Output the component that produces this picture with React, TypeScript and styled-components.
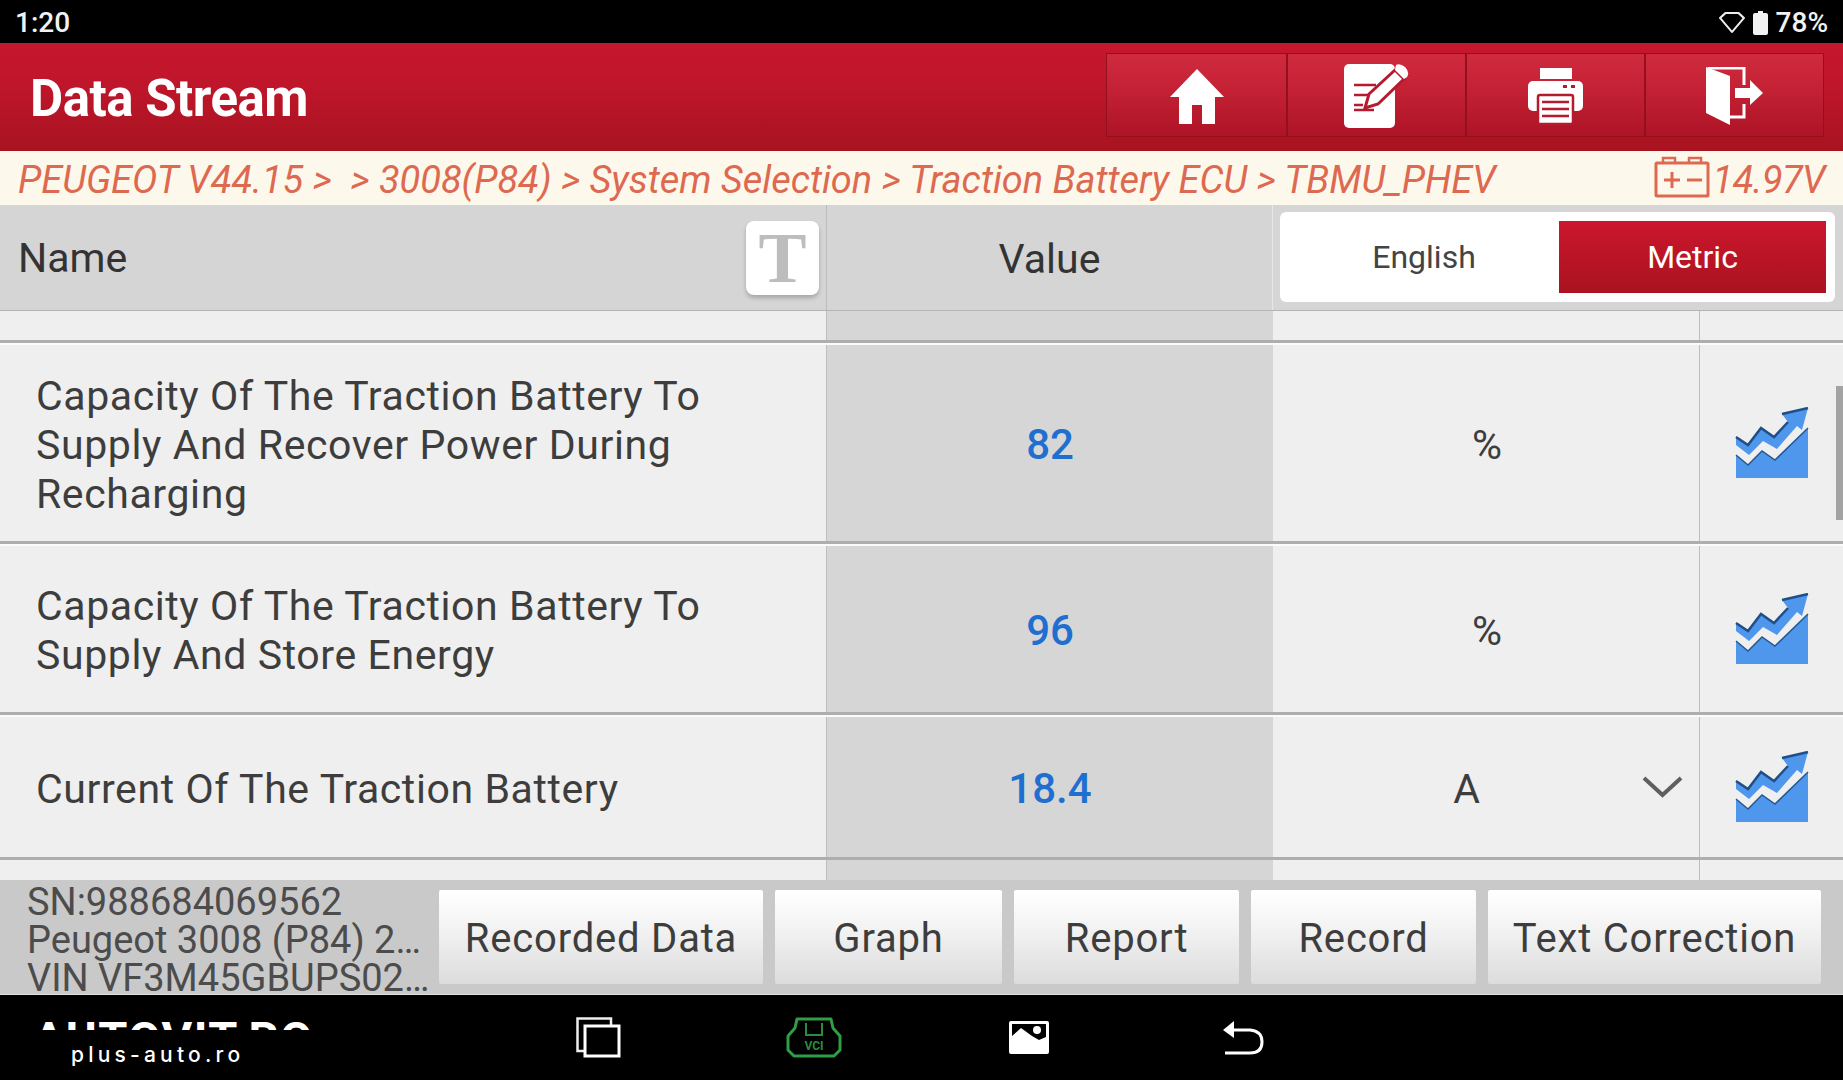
import React from 'react'
import styled, { createGlobalStyle } from 'styled-components'

const GlobalStyle = createGlobalStyle`
  html, body {
    margin: 0;
    padding: 0;
    overflow: hidden;
    background: #000;
    font-family: Roboto, "Liberation Sans", sans-serif;
  }
`

const COLUMNS = '827px 446px 427px 143px'

const Screen = styled.div`
  position: relative;
  width: 1843px;
  height: 1080px;
  display: flex;
  flex-direction: column;
  overflow: hidden;
`

const StatusBar = styled.div`
  height: 43px;
  flex: none;
  background: #000;
  color: #f2f2f2;
  display: flex;
  align-items: center;
  justify-content: space-between;
  padding: 2px 15px 0;
  box-sizing: border-box;
  font-size: 28px;
  font-weight: 500;
`

const StatusRight = styled.div`
  display: flex;
  align-items: center;
  gap: 8px;
`

const TitleBar = styled.div`
  height: 108px;
  flex: none;
  display: flex;
  align-items: center;
  justify-content: space-between;
  padding: 4px 19px 0 30px;
  box-sizing: border-box;
  background: linear-gradient(#c6172d, #c0162b 35%, #a81320);
`

const Title = styled.h1`
  margin: 0 0 2px;
  color: #fff;
  font-size: 51px;
  font-weight: 700;
  letter-spacing: -0.5px;
`

const ActionGroup = styled.div`
  display: flex;
  height: 82px;
  margin-bottom: 8px;
  border: 1px solid #95101d;
`

const ActionButton = styled.button`
  width: 179px;
  padding: 2px 0 0;
  border: 0;
  border-left: 2px solid #95101d;
  background: linear-gradient(#cf2a3e, #c72337 35%, #ad1425);
  display: flex;
  align-items: center;
  justify-content: center;

  &:first-child {
    border-left: 0;
  }
`

const Breadcrumb = styled.div`
  height: 54px;
  flex: none;
  background: #fdf8ec;
  color: #dd6a50;
  font-size: 38px;
  font-style: italic;
  letter-spacing: -0.03px;
  display: flex;
  align-items: center;
  justify-content: space-between;
  padding: 3px 18px 0;
  box-sizing: border-box;
  white-space: pre;
`

const Voltage = styled.div`
  display: flex;
  align-items: center;
  gap: 3px;
  letter-spacing: -0.6px;
`

const VoltageIcon = styled.span`
  display: flex;
  margin-top: -6px;
`

const TableHeader = styled.div`
  height: 106px;
  flex: none;
  display: grid;
  grid-template-columns: 827px 446px 570px;
  background: #d5d5d5;
  border-bottom: 1px solid #b4b4b4;
  box-sizing: border-box;
  color: #333;
  font-size: 41px;
`

const NameHead = styled.div`
  display: flex;
  align-items: center;
  justify-content: space-between;
  padding: 0 7px 0 18px;
  border-right: 1px solid #bcbcbc;
`

const FontButton = styled.button`
  width: 73px;
  height: 74px;
  padding: 0;
  border: 0;
  border-radius: 8px;
  background: #fff;
  color: #bdbdbd;
  font-family: "Liberation Serif", serif;
  font-size: 72px;
  font-weight: 700;
  line-height: 74px;
  box-shadow: 0 3px 4px rgba(0, 0, 0, 0.22);
`

const ValueHead = styled.div`
  display: flex;
  align-items: center;
  justify-content: center;
  padding-top: 2px;
  border-right: 1px solid #e6e6e6;
`

const UnitHead = styled.div`
  padding: 7px 8px 8px 7px;
  display: flex;
`

const UnitToggle = styled.div`
  flex: 1;
  display: flex;
  align-items: center;
  background: #fff;
  border-radius: 6px;
  padding: 0 9px 0 9px;
  font-size: 32px;
`

const UnitOption = styled.div<{ $active?: boolean }>`
  flex: ${p => (p.$active ? '0 0 267px' : '1')};
  height: 72px;
  display: flex;
  align-items: center;
  justify-content: center;
  color: ${p => (p.$active ? '#fff' : '#444')};
  background: ${p => (p.$active ? 'linear-gradient(#cc162d, #a91320)' : 'transparent')};
`

const TableBody = styled.div`
  flex: 1;
  min-height: 0;
  display: flex;
  flex-direction: column;
  overflow: hidden;
`

const Row = styled.div<{ $height: number; $last?: boolean }>`
  height: ${p => p.$height}px;
  flex: none;
  display: grid;
  grid-template-columns: ${COLUMNS};
  box-sizing: border-box;
  border-top: ${p => (p.$height > 40 ? '2px solid #fbfbfb' : '0')};
  border-bottom: ${p => (p.$last ? '0' : '3px solid #aeaeae')};
`

const NameCell = styled.div`
  background: #efefef;
  border-right: 1px solid #bdbdbd;
  display: flex;
  align-items: center;
  padding: 4px 100px 0 36px;
  color: #3d3d3d;
  font-size: 41px;
  line-height: 49px;
  letter-spacing: 0.6px;
`

const ValueCell = styled.div`
  background: #d6d6d6;
  display: flex;
  align-items: center;
  justify-content: center;
  padding-top: 2px;
  color: #1f6fd0;
  font-size: 42px;
  font-weight: 500;
`

const UnitCell = styled.div`
  background: #efefef;
  border-right: 1px solid #bdbdbd;
  display: flex;
  align-items: center;
  padding: 3px 16px 0 18px;
  color: #3d3d3d;
  font-size: 41px;
`

const UnitText = styled.span`
  flex: 1;
  text-align: center;
`

const Chevron = styled.span`
  display: flex;
  margin-top: -5px;
`

const ChartCell = styled.div`
  background: #efefef;
  display: flex;
  align-items: center;
  justify-content: center;
`

const ScrollThumb = styled.div`
  position: absolute;
  top: 386px;
  right: 0;
  width: 7px;
  height: 134px;
  background: #a3a3a3;
`

const Footer = styled.div`
  height: 115px;
  flex: none;
  display: flex;
  background: #c9c9c9;
  box-sizing: border-box;
  border-bottom: 1px solid #e2e2e2;
`

const DeviceInfo = styled.div`
  width: 439px;
  flex: none;
  box-sizing: border-box;
  padding: 3px 0 0 27px;
  color: #4c4c4c;
  font-size: 38px;
  line-height: 38px;
  white-space: nowrap;
`

const FooterButtons = styled.div`
  display: grid;
  grid-template-columns: 324px 227px 225px 225px 333px;
  gap: 12px;
  padding: 10px 0 10px;
`

const FooterButton = styled.button`
  padding: 3px 0 0;
  border: 0;
  border-radius: 2px;
  background: linear-gradient(#fff, #f3f3f3 40%, #dcdcdc);
  color: #3d3d3d;
  font-family: inherit;
  font-size: 40px;
  letter-spacing: 0.8px;
`

const NavBar = styled.div`
  height: 85px;
  flex: none;
  box-sizing: border-box;
  background: #000;
  display: grid;
  grid-template-columns: repeat(4, 215px);
  padding: 0 0 0 491px;
  align-items: center;
  justify-items: center;
`

const Watermark = styled.div`
  position: absolute;
  left: 33px;
  top: 1022px;
  color: #fff;
`

const ClippedBrand = styled.div`
  height: 8px;
  overflow: hidden;
  font-size: 47px;
  font-weight: 700;
  line-height: 0.72;
  letter-spacing: 1.5px;
  white-space: nowrap;
`

const BrandSite = styled.div`
  margin: 12px 0 0 38px;
  font-family: Inter, Roboto, sans-serif;
  font-size: 21px;
  font-weight: 500;
  letter-spacing: 4.2px;
`

const WifiIcon = () => (
  <svg width="26" height="22" viewBox="0 0 24 22" preserveAspectRatio="none">
    <path d="M1 6 L6 1 H18 L23 6 L12 20 Z" fill="none" stroke="#eee" strokeWidth="2" strokeLinejoin="round" />
  </svg>
)

const BatteryIcon = () => (
  <svg width="15" height="24" viewBox="0 0 15 24">
    <path d="M5 0 H10 V2 H13 Q15 2 15 4 V22 Q15 24 13 24 H2 Q0 24 0 22 V4 Q0 2 2 2 H5 Z" fill="#f2f2f2" />
  </svg>
)

const HomeIcon = () => (
  <svg width="54" height="55" viewBox="0 0 54 55">
    <path d="M27 0 L54 28 H45 V55 H32 V36 H22 V55 H9 V28 H0 Z" fill="#fff" strokeLinejoin="round" />
  </svg>
)

const NoteIcon = () => (
  <svg width="65" height="64" viewBox="0 0 65 64">
    <rect x="0" y="0" width="51" height="64" rx="5" fill="#fff" />
    <path d="M10 21 H32 M10 31 H25 M10 41 H19 M10 46 H30" stroke="#b51b2e" strokeWidth="2.5" fill="none" />
    <path d="M21 44 L25 30 L51 6 L60 15 L34 40 Z" fill="#fff" stroke="#b51b2e" strokeWidth="3" />
    <path d="M52 1 Q56 -1 61 3 Q66 8 63 13 L60 15 L51 6 Z" fill="#fff" />
  </svg>
)

const PrinterIcon = () => (
  <svg width="55" height="57" viewBox="0 0 55 57">
    <rect x="12" y="0" width="32" height="11" fill="#fff" />
    <rect x="0" y="13" width="55" height="30" rx="5" fill="#fff" />
    <rect x="35" y="17" width="4" height="3" fill="#b51b2e" />
    <rect x="43" y="17" width="4" height="3" fill="#b51b2e" />
    <rect x="10" y="27" width="35" height="29" rx="2" fill="#fff" stroke="#b51b2e" strokeWidth="2.5" />
    <path d="M14 34 H41 M14 41 H41 M14 48 H41" stroke="#b51b2e" strokeWidth="2.5" />
  </svg>
)

const ExitIcon = () => (
  <svg width="57" height="58" viewBox="0 0 57 58">
    <path d="M2 1 H38 V18 M38 37 V50 H24" fill="none" stroke="#fff" strokeWidth="3" />
    <path d="M0 0 L24 9 V58 L0 46 Z" fill="#fff" />
    <path d="M29 21 H44 V13 L57 26 L44 38 V31 H29 Z" fill="#fff" />
  </svg>
)

const CarBatteryIcon = () => (
  <svg width="56" height="42" viewBox="0 0 56 42">
    <path d="M9 7 V2 H21 V7 M35 7 V2 H47 V7" fill="none" stroke="#dd6a50" strokeWidth="2.5" />
    <rect x="2" y="7" width="52" height="33" rx="1" fill="none" stroke="#dd6a50" strokeWidth="3" />
    <path d="M10 24 H26 M18 16 V32 M33 24 H48" stroke="#dd6a50" strokeWidth="3" />
  </svg>
)

const ChartIcon = () => (
  <svg width="74" height="72" viewBox="0 0 74 72">
    <path d="M1 48 L13 58 L27 44 L40 53 L73 21 V71 H1 Z" fill="#4e97ec" />
    <path d="M1 30 L13 38 L26 21 L39 30 L53 15 L47 7 L73 1 L67 23 L62 19 L42 42 L28 34 L14 48 L1 38 Z" fill="#4e97ec" />
    <path d="M1 30 L13 38 L26 21 L39 30 L53 15 M47 7 L73 1" fill="none" stroke="#1f4f86" strokeWidth="2.5" />
    <path d="M1 48 L13 58 L27 44 L40 53 L73 21" fill="none" stroke="#27598f" strokeWidth="1.5" />
  </svg>
)

const ChevronIcon = () => (
  <svg width="41" height="23" viewBox="0 0 41 23">
    <path d="M2 3 L20.5 20 L39 3" fill="none" stroke="#5f5f5f" strokeWidth="4" />
  </svg>
)

const WindowsIcon = () => (
  <svg width="45" height="41" viewBox="0 0 45 41">
    <path d="M8 34 H1.5 V1.5 H35 V9" fill="none" stroke="#eee" strokeWidth="2.5" />
    <rect x="9" y="9" width="34" height="30" fill="none" stroke="#fff" strokeWidth="3" />
  </svg>
)

const VciIcon = () => (
  <svg width="60" height="41" viewBox="0 0 60 41">
    <path
      d="M13 2 H47 L49 11 L56 19 V33 L50 39 H10 L4 33 V19 L11 11 Z"
      fill="none"
      stroke="#2f9e44"
      strokeWidth="3"
      strokeLinejoin="round"
    />
    <path d="M22 6 V18 H38 V6" fill="none" stroke="#2a8c3c" strokeWidth="2" />
    <text x="30" y="33" textAnchor="middle" fontSize="12" fontWeight="700" fill="#2a8c3c" fontFamily="Roboto, sans-serif">
      VCI
    </text>
  </svg>
)

const PictureIcon = () => (
  <svg width="40" height="33" viewBox="0 0 40 33">
    <rect x="0" y="0" width="40" height="33" rx="2" fill="#fff" />
    <path d="M3 15 L12 7 L23 15 L30 19 L37 16 V3 H3 Z" fill="#000" />
    <circle cx="28" cy="9" r="4" fill="#fff" />
  </svg>
)

const BackIcon = () => (
  <svg width="41" height="34" viewBox="0 0 41 34">
    <path d="M0 9 L11 0 V17 Z" fill="#fff" />
    <path d="M10 9 H27 Q39 10 39 21 Q39 32 27 32 H2" fill="none" stroke="#fff" strokeWidth="3" />
  </svg>
)

const rows = [
  { id: 1, height: 201, name: 'Capacity Of The Traction Battery To Supply And Recover Power During Recharging', value: '82', unit: '%' },
  { id: 2, height: 171, name: 'Capacity Of The Traction Battery To Supply And Store Energy', value: '96', unit: '%' },
  { id: 3, height: 145, name: 'Current Of The Traction Battery', value: '18.4', unit: 'A', options: true },
]

const footerButtons = ['Recorded Data', 'Graph', 'Report', 'Record', 'Text Correction']

const App: React.FC = () => {
  return (
    <Screen>
      <GlobalStyle />
      <StatusBar>
        <span>1:20</span>
        <StatusRight>
          <WifiIcon />
          <BatteryIcon />
          <span>78%</span>
        </StatusRight>
      </StatusBar>

      <TitleBar>
        <Title>Data Stream</Title>
        <ActionGroup>
          <ActionButton><HomeIcon /></ActionButton>
          <ActionButton><NoteIcon /></ActionButton>
          <ActionButton><PrinterIcon /></ActionButton>
          <ActionButton><ExitIcon /></ActionButton>
        </ActionGroup>
      </TitleBar>

      <Breadcrumb>
        <span>PEUGEOT V44.15 &gt;  &gt; 3008(P84) &gt; System Selection &gt; Traction Battery ECU &gt; TBMU_PHEV</span>
        <Voltage>
          <VoltageIcon><CarBatteryIcon /></VoltageIcon>
          <span>14.97V</span>
        </Voltage>
      </Breadcrumb>

      <TableHeader>
        <NameHead>
          <span>Name</span>
          <FontButton>T</FontButton>
        </NameHead>
        <ValueHead>Value</ValueHead>
        <UnitHead>
          <UnitToggle>
            <UnitOption>English</UnitOption>
            <UnitOption $active>Metric</UnitOption>
          </UnitToggle>
        </UnitHead>
      </TableHeader>

      <TableBody>
        <Row $height={32}>
          <NameCell />
          <ValueCell />
          <UnitCell />
          <ChartCell />
        </Row>
        {rows.map(row => (
          <Row key={row.id} $height={row.height}>
            <NameCell>{row.name}</NameCell>
            <ValueCell>{row.value}</ValueCell>
            <UnitCell>
              <UnitText>{row.unit}</UnitText>
              {row.options && <Chevron><ChevronIcon /></Chevron>}
            </UnitCell>
            <ChartCell><ChartIcon /></ChartCell>
          </Row>
        ))}
        <Row $height={20} $last>
          <NameCell />
          <ValueCell />
          <UnitCell />
          <ChartCell />
        </Row>
      </TableBody>
      <ScrollThumb />

      <Footer>
        <DeviceInfo>
          SN:988684069562
          <br />
          Peugeot 3008 (P84) 2…
          <br />
          VIN VF3M45GBUPS02…
        </DeviceInfo>
        <FooterButtons>
          {footerButtons.map(label => (
            <FooterButton key={label}>{label}</FooterButton>
          ))}
        </FooterButtons>
      </Footer>

      <NavBar>
        <WindowsIcon />
        <VciIcon />
        <PictureIcon />
        <BackIcon />
      </NavBar>

      <Watermark>
        <ClippedBrand>AUTOVIT.RO</ClippedBrand>
        <BrandSite>plus-auto.ro</BrandSite>
      </Watermark>
    </Screen>
  )
}

export default App
